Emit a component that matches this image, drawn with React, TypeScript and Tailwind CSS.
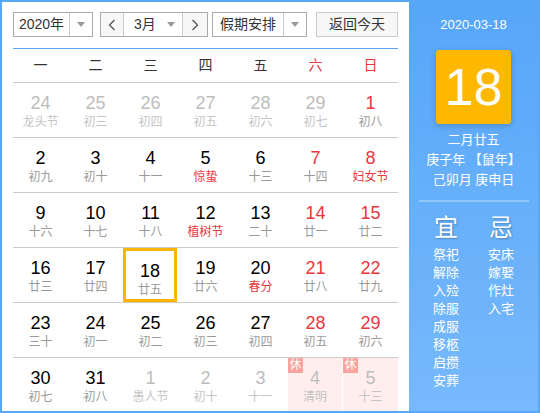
import React from "react";

type Day = {
  n: number;
  lunar: string;
  other?: boolean;
  weekend?: boolean;
  fest?: boolean;
  rest?: boolean;
  today?: boolean;
};

const rows: Day[][] = [
  [
    { n: 24, lunar: "龙头节", other: true },
    { n: 25, lunar: "初三", other: true },
    { n: 26, lunar: "初四", other: true },
    { n: 27, lunar: "初五", other: true },
    { n: 28, lunar: "初六", other: true },
    { n: 29, lunar: "初七", other: true },
    { n: 1, lunar: "初八", weekend: true },
  ],
  [
    { n: 2, lunar: "初九" },
    { n: 3, lunar: "初十" },
    { n: 4, lunar: "十一" },
    { n: 5, lunar: "惊蛰", fest: true },
    { n: 6, lunar: "十三" },
    { n: 7, lunar: "十四", weekend: true },
    { n: 8, lunar: "妇女节", weekend: true, fest: true },
  ],
  [
    { n: 9, lunar: "十六" },
    { n: 10, lunar: "十七" },
    { n: 11, lunar: "十八" },
    { n: 12, lunar: "植树节", fest: true },
    { n: 13, lunar: "二十" },
    { n: 14, lunar: "廿一", weekend: true },
    { n: 15, lunar: "廿二", weekend: true },
  ],
  [
    { n: 16, lunar: "廿三" },
    { n: 17, lunar: "廿四" },
    { n: 18, lunar: "廿五", today: true },
    { n: 19, lunar: "廿六" },
    { n: 20, lunar: "春分", fest: true },
    { n: 21, lunar: "廿八", weekend: true },
    { n: 22, lunar: "廿九", weekend: true },
  ],
  [
    { n: 23, lunar: "三十" },
    { n: 24, lunar: "初一" },
    { n: 25, lunar: "初二" },
    { n: 26, lunar: "初三" },
    { n: 27, lunar: "初四" },
    { n: 28, lunar: "初五", weekend: true },
    { n: 29, lunar: "初六", weekend: true },
  ],
  [
    { n: 30, lunar: "初七" },
    { n: 31, lunar: "初八" },
    { n: 1, lunar: "愚人节", other: true },
    { n: 2, lunar: "初十", other: true },
    { n: 3, lunar: "十一", other: true },
    { n: 4, lunar: "清明", other: true, rest: true },
    { n: 5, lunar: "十三", other: true, rest: true },
  ],
];

const weekdays = ["一", "二", "三", "四", "五", "六", "日"];
const yi = ["祭祀", "解除", "入殓", "除服", "成服", "移柩", "启攒", "安葬"];
const ji = ["安床", "嫁娶", "作灶", "入宅"];

function Caret() {
  return (
    <span className="block w-0 h-0 border-x-[4px] border-x-transparent border-t-[5px] border-t-[#999]" />
  );
}

function Chevron({ dir }: { dir: "left" | "right" }) {
  return (
    <svg width="8" height="12" viewBox="0 0 8 12" fill="none">
      <polyline
        points={dir === "left" ? "6.5,1 1.5,6 6.5,11" : "1.5,1 6.5,6 1.5,11"}
        stroke="#555"
        strokeWidth="1.3"
      />
    </svg>
  );
}

function Cell({ d, col }: { d: Day; col: number }) {
  const numColor = d.other
    ? "text-[#bdbdbd]"
    : d.weekend
    ? "text-[#e8373d]"
    : "text-black";
  const lunarColor = d.other
    ? "text-[#c4c4c4]"
    : d.fest
    ? "text-[#e8373d]"
    : "text-[#9a9a9a]";
  return (
    <div
      className={
        "relative flex flex-col items-center pt-[10px] " +
        (d.rest ? "bg-[#ffeeed] " : "") +
        (d.rest && col === 5 ? "border-r border-white " : "") +
        (d.today ? "border-[3px] border-[#ffb400] pt-[7px] w-[54px] " : "")
      }
    >
      {d.rest && (
        <span className="absolute left-0 top-0 w-[15px] h-[15px] bg-[#f8a39d] text-white text-[12px] leading-[15px] text-center">
          休
        </span>
      )}
      <span className={"text-[18px] leading-[20px] " + numColor}>{d.n}</span>
      <span className={"mt-px text-[12px] leading-[16px] " + lunarColor}>{d.lunar}</span>
    </div>
  );
}

export default function App() {
  return (
    <div
      className="w-[540px] h-[413px] border-2 border-[#58a7f9] flex overflow-hidden"
      style={{ fontFamily: '"Liberation Sans", "Noto Sans CJK SC", sans-serif' }}
    >
      {/* Calendar */}
      <div className="w-[407px] h-full bg-white px-[11px] flex flex-col">
        {/* Toolbar */}
        <div className="mt-[10px] h-[25px] flex items-stretch text-[14px] text-[#333]">
          <div className="w-[80px] flex border border-[#aaa] bg-white">
            <span className="w-[55px] flex items-center justify-center">2020年</span>
            <span className="flex-1 flex items-center justify-center border-l border-[#ccc]">
              <Caret />
            </span>
          </div>
          <div className="ml-[7px] w-[108px] flex border border-[#aaa] bg-white">
            <span className="w-[22px] flex items-center justify-center bg-[#f7f7f7]">
              <Chevron dir="left" />
            </span>
            <span className="w-[60px] flex items-center border-x border-[#ccc] pl-[10px] pr-[7px]">
              <span className="flex-1">3月</span>
              <Caret />
            </span>
            <span className="flex-1 flex items-center justify-center bg-[#f7f7f7]">
              <Chevron dir="right" />
            </span>
          </div>
          <div className="ml-[4px] w-[95px] flex border border-[#aaa] bg-white">
            <span className="w-[70px] flex items-center justify-center">假期安排</span>
            <span className="flex-1 flex items-center justify-center border-l border-[#ccc]">
              <Caret />
            </span>
          </div>
          <button className="ml-[9px] w-[82px] border border-[#ccc] bg-[#f7f7f7] text-[14px] text-[#333]">
            返回今天
          </button>
        </div>

        <div className="mt-[11px] h-px bg-[#58a7f9]" />

        {/* Weekdays */}
        <div className="h-[34px] grid grid-cols-7 border-b border-[#ccc] text-[14px]">
          {weekdays.map((w, i) => (
            <span
              key={w}
              className={
                "flex items-center justify-center " +
                (i >= 5 ? "text-[#e8373d]" : "text-[#333]")
              }
            >
              {w}
            </span>
          ))}
        </div>

        {/* Days */}
        {rows.map((r, ri) => (
          <div
            key={ri}
            className={
              "grid grid-cols-7 shrink-0 " +
              (ri < rows.length - 1 ? "h-[55px] border-b border-[#ccc]" : "flex-1")
            }
          >
            {r.map((d, ci) => (
              <Cell key={ci} d={d} col={ci} />
            ))}
          </div>
        ))}
      </div>

      {/* Side panel */}
      <div className="flex-1 h-full bg-linear-to-b from-[#56a6f9] to-[#77b9fc] flex flex-col items-center text-white">
        <div className="mt-[13px] text-[13px] leading-[20px]">2020-03-18</div>
        <div className="mt-[15px] w-[75px] h-[74px] rounded-[3px] bg-[#ffb800] shadow-[0_2px_6px_rgba(0,0,0,0.2)] flex items-center justify-center text-[52px] leading-none">
          18
        </div>
        <div className="mt-[6px] flex flex-col items-center text-[13px] leading-[20px]">
          <span>二月廿五</span>
          <span>庚子年 【鼠年】</span>
          <span>己卯月 庚申日</span>
        </div>
        <div className="mt-[10px] w-[110px] h-[2px] bg-[#92c7fc]" />
        <div className="mt-[11px] flex gap-[15px]">
          <div className="w-[40px] flex flex-col items-center">
            <span className="text-[24px] leading-[30px] [text-shadow:1px_1px_2px_rgba(0,0,0,0.25)]">宜</span>
            <div className="mt-[3px] flex flex-col items-center text-[13px] leading-[18px]">
              {yi.map((t) => (
                <span key={t}>{t}</span>
              ))}
            </div>
          </div>
          <div className="w-[40px] flex flex-col items-center">
            <span className="text-[24px] leading-[30px] [text-shadow:1px_1px_2px_rgba(0,0,0,0.25)]">忌</span>
            <div className="mt-[3px] flex flex-col items-center text-[13px] leading-[18px]">
              {ji.map((t) => (
                <span key={t}>{t}</span>
              ))}
            </div>
          </div>
        </div>
      </div>
    </div>
  );
}
